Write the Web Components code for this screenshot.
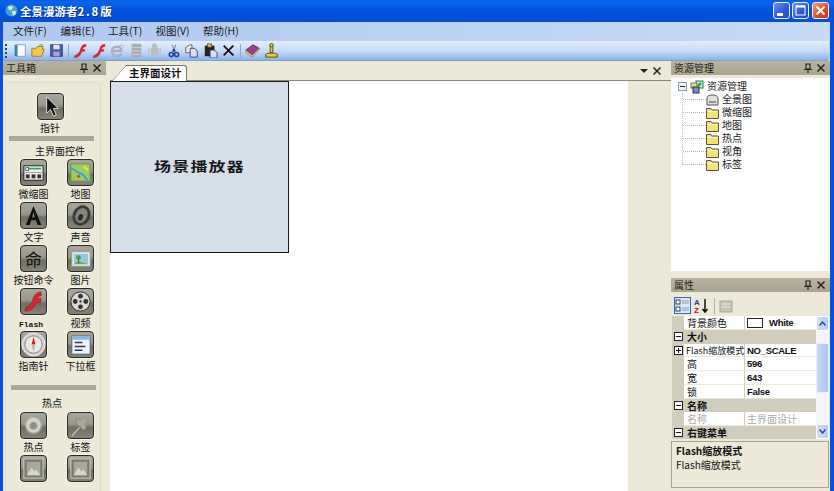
<!DOCTYPE html>
<html lang="zh">
<head>
<meta charset="utf-8">
<title>全景漫游者</title>
<style>
  html, body { margin: 0; height: 100%; overflow: hidden; background: #ece9d8; }
  body { font: 10px "Noto Sans CJK SC", "Liberation Sans", sans-serif; color: #111; }
</style>
</head>
<body>
<app-window></app-window>

<script>
// Iconos dibujados a mano, mismos nombres en toda la app
const FOLDER = '<svg width="13" height="12" viewBox="0 0 13 12"><path d="M.5 3.500V1.500h4.500l1 1.500h6.500v8.500H.5z" fill="#f3e27c" stroke="#57553f"/><path d="M1.500 4.500h10" stroke="#fff7c0"/></svg>';

const TOOL_ICONS = {
  pointer: '<path d="M9 3v17l4-4 3 7 3-1-3-7h5z" fill="#111" stroke="#ddd" stroke-width="1"/>',
  thumb: '<rect x="3" y="6" width="20" height="15" fill="#eee" stroke="#222"/><path d="M7 9h14" stroke="#2bb24c" stroke-width="2"/><rect x="5" y="8" width="3" height="3" fill="#fff" stroke="#222" stroke-width=".7"/><path d="M4 13h18" stroke="#999"/><rect x="5" y="15" width="4" height="4" fill="#333"/><rect x="11" y="15" width="4" height="4" fill="#333"/><rect x="17" y="15" width="4" height="4" fill="#333"/>',
  map: '<rect x="3" y="4" width="20" height="18" fill="#9ccc5a" stroke="#7c8c50"/><path d="M3 9c5 0 6 4 10 5s5 4 7 7" fill="none" stroke="#3a9fe0" stroke-width="2"/><circle cx="11" cy="17" r="1.600" fill="#d83a3a"/><path d="M16 6l5 5" stroke="#e6dd60" stroke-width="2"/>',
  text: '<path d="M13 3L5 23h4l1.600-5h5l1.600 5h4zM11.600 15L13 9.500l1.400 5.500z" fill="#111" fill-rule="evenodd"/>',
  sound: '<ellipse cx="14" cy="13" rx="9" ry="11" transform="rotate(25 14 13)" fill="#3a3a36"/><ellipse cx="14" cy="13" rx="6" ry="8" transform="rotate(25 14 13)" fill="#86857c"/><ellipse cx="13" cy="15" rx="2.500" ry="3.500" transform="rotate(25 13 15)" fill="#2c2c28"/>',
  picture: '<rect x="4" y="6" width="19" height="15" fill="#f3f3e8" stroke="#999"/><rect x="6" y="8" width="15" height="11" fill="#8fcbe8"/><path d="M6 19l4-3 5 1 6 2z" fill="#6aae3c"/><circle cx="11" cy="12" r="2.500" fill="#4f9a37"/><path d="M11 14v4" stroke="#7a5a30"/>',
  flash: '<path d="M21 3c-6 0-8 5-9 9-1 3-3 6-7 7l-1 4c7 0 10-4 12-9h4l1-4h-4c1-2 2-3 4-3z" fill="#d8242c" stroke="#8c1218" stroke-width=".5"/>',
  film: '<circle cx="13" cy="13" r="10" fill="#d8d8d0" stroke="#333"/><circle cx="13" cy="7.500" r="2.500" fill="#333"/><circle cx="13" cy="18.500" r="2.500" fill="#333"/><circle cx="7.500" cy="13" r="2.500" fill="#333"/><circle cx="18.500" cy="13" r="2.500" fill="#333"/><circle cx="13" cy="13" r="1.200" fill="#333"/>',
  compass: '<circle cx="13" cy="13" r="12" fill="#cfcfcf" stroke="#eee"/><circle cx="13" cy="13" r="9" fill="#e8e8e4" stroke="#888"/><path d="M13 5l2 8h-4z" fill="#e01818"/><path d="M11 13h4l-2 8z" fill="#b8b8b8"/>',
  combo: '<rect x="4" y="4" width="19" height="19" fill="#eef4fa" stroke="#567"/><path d="M4 4h19v4H4z" fill="#8db6de"/><path d="M7 11h8M7 15h11M7 19h8" stroke="#335" stroke-width="1.500"/>',
  hotspot: '<circle cx="13" cy="13" r="9" fill="#e3e2da" opacity=".4"/><circle cx="13" cy="13" r="6" fill="none" stroke="#d5d4cc" stroke-width="3"/><circle cx="13" cy="13" r="3" fill="#8d8c82"/>',
  pin: '<path d="M4 24l8-9" stroke="#cfcec6" stroke-width="1.200"/><path d="M9 11l7 7 3-2-1-5 3-3-4-4-3 3-5-1z" fill="#a9a89e" stroke="#7a796f" stroke-width=".5"/>',
  image: '<rect x="3" y="3" width="20" height="20" fill="#7c7b70" stroke="#d0cfc4"/><rect x="6" y="6" width="14" height="14" fill="#a8a79c"/><path d="M6 20l5-8 3 4 2-2 4 6z" fill="#d8d7cc"/>'
};

const BAR_ICONS = [
  '<rect x="3" y="2" width="3" height="13" fill="#2f7fb8"/><rect x="6" y="2" width="9" height="13" fill="#fff" stroke="#8a9aa8"/>',
  '<path d="M1 6h5l1-2h6v3h2l-3 8H1z" fill="#f0c850" stroke="#9a7a20"/><path d="M9 3c2-2 4-1 5 1" fill="none" stroke="#3a8a30"/>',
  '<rect x="2" y="2" width="13" height="13" fill="#4a5fc0" stroke="#243080"/><rect x="5" y="2" width="7" height="5" fill="#e8e8f4"/><rect x="5" y="10" width="7" height="5" fill="#aab"/>',
  null,
  '<path d="M15 1c-5 0-6 4-7 7s-3 5-6 6l-1 3c5 0 8-3 9-7h3l1-3h-3c1-2 2-3 4-3z" fill="#d8242c"/>',
  '<path d="M15 1c-5 0-6 4-7 7s-3 5-6 6l-1 3c5 0 8-3 9-7h3l1-3h-3c1-2 2-3 4-3z" fill="#d8242c"/>',
  '<path d="M3 9h10c0-3-2-5-5-5s-6 2-6 5 2 6 6 6c2 0 4-1 5-3" fill="none" stroke="#a9b0b8" stroke-width="2.500"/><path d="M11 3c3-2 5-1 4 2" fill="none" stroke="#a9b0b8"/>',
  '<rect x="3" y="1" width="11" height="15" fill="#a8adb2"/><path d="M3 5h11M3 9h11M3 13h11" stroke="#cdd1d5"/>',
  '<rect x="4" y="5" width="9" height="8" rx="1" fill="#b8bdc2"/><circle cx="8.500" cy="3.500" r="3" fill="#b8bdc2"/><path d="M2 6v5M15 6v5M6 13v3M11 13v3" stroke="#b8bdc2" stroke-width="1.500"/>',
  '<path d="M7 2l2 6M11 2L9 8" stroke="#777"/><circle cx="6" cy="13" r="2.300" fill="none" stroke="#1f3f9c" stroke-width="1.800"/><circle cx="12" cy="13" r="2.300" fill="none" stroke="#1f3f9c" stroke-width="1.800"/><circle cx="9" cy="8.500" r="1.800" fill="#1f3f9c"/>',
  '<path d="M2 5l5-3h2v9H2z" fill="#f4f0d8" stroke="#555"/><path d="M7 6h5l3 3v7H7z" fill="#d8e0f8" stroke="#2a3a90"/>',
  '<rect x="2" y="3" width="11" height="12" fill="#26221c"/><rect x="5" y="1" width="5" height="4" fill="#c8b060" stroke="#222" stroke-width=".6"/><path d="M8 8h5l3 3v6H8z" fill="#d8e0f8" stroke="#2a3a90"/>',
  '<path d="M3 3l11 11M14 3L3 14" stroke="#111" stroke-width="2"/>',
  null,
  '<path d="M1 8l8-6 7 4-8 8z" fill="#9a3f90" stroke="#5a2a58"/><path d="M1 8v3l7 5 8-8V6l-8 8z" fill="#e8d878" stroke="#6a5a38" stroke-width=".6"/>',
  '<path d="M7 2h3v9H7z" fill="#e8d020" stroke="#4a4210"/><circle cx="8.500" cy="2.500" r="2" fill="#e8d020" stroke="#4a4210"/><path d="M2 13c0-2 13-2 13 0v3H2z" fill="#e8d020" stroke="#4a4210"/>'
];

customElements.define('title-bar', class extends HTMLElement {
  constructor() {
    super();
    this.attachShadow({ mode: 'open' });
    this.shadowRoot.innerHTML = `
      <style>
        :host { display: flex; align-items: center; height: 22px; padding: 0 5px 1px 5px; box-sizing: border-box;
          background: linear-gradient(#0a5ad8 0, #0a66ec 8%, #0355e0 40%, #0250da 80%, #0a4ec4 100%); }
        svg.logo { margin-right: 2px; }
        .t { flex: 1; color: #fff; font-weight: 700; font-size: 11.500px; line-height: 20px; text-shadow: 1px 1px 0 #0a2f8c; }
        .t span { letter-spacing: 1.800px; }
        .btn { width: 17px; height: 17px; box-sizing: border-box; margin-left: 2px; border: 1px solid #e8eefc; border-radius: 3px;
          background: linear-gradient(135deg, #6f92ee, #2a55d8 60%, #2a48c0); }
        .btn.x { background: linear-gradient(135deg, #ee9a80, #dc4a24 60%, #c03010); margin-left: 3px; }
        .btn svg { display: block; }
      </style>
      <svg class="logo" width="13" height="13" viewBox="0 0 14 14"><circle cx="7" cy="7" r="6.500" fill="#4aa0c8"/><path d="M3 3l4-1 2 2-3 3-2-1zM7 8l4-1 1 3-3 3z" fill="#d4e8e0"/></svg>
      <span class="t">全景漫游者<span>2.8</span>版</span>
      <span class="btn"><svg width="15" height="15"><rect x="3" y="10" width="6" height="3" fill="#fff"/></svg></span>
      <span class="btn"><svg width="15" height="15"><rect x="3" y="3" width="9" height="9" fill="none" stroke="#fff"/><path d="M3 3.500h9" stroke="#fff" stroke-width="2"/></svg></span>
      <span class="btn x"><svg width="15" height="15"><path d="M3.500 3.500l8 8M11.500 3.500l-8 8" stroke="#fff" stroke-width="2"/></svg></span>`;
  }
});

customElements.define('menu-bar', class extends HTMLElement {
  constructor() {
    super();
    this.attachShadow({ mode: 'open' });
    this.shadowRoot.innerHTML = `
      <style>
        :host { display: flex; height: 19px; padding: 0 0 2px 10px; box-sizing: border-box; background: linear-gradient(90deg, #afc8f0, #c6daf6); align-items: center; }
        span { width: 47.500px; font-size: 10.500px; white-space: nowrap; color: #1a1a1a; }
      </style>
      <span>文件(F)</span><span>编辑(E)</span><span>工具(T)</span><span>视图(V)</span><span>帮助(H)</span>`;
  }
});

customElements.define('tool-strip', class extends HTMLElement {
  constructor() {
    super();
    this.attachShadow({ mode: 'open' });
    const icons = BAR_ICONS.map(p => p === null
      ? '<i class="sep"></i>'
      : `<svg width="15" height="15" viewBox="0 0 17 17">${p}</svg>`).join('');
    this.shadowRoot.innerHTML = `
      <style>
        :host { display: flex; align-items: center; height: 20px; padding-left: 2px; box-sizing: border-box; gap: 3.500px;
          background: linear-gradient(#e3effc, #c3d9f7 55%, #8fb2e6); border-bottom: 1px solid #7f9fd0; border-radius: 0 0 3px 0; margin-right: 1px; }
        .grip { width: 2px; height: 14px; margin-right: 1.500px; background: repeating-linear-gradient(#26446e 0 2px, transparent 2px 4px); }
        .sep { width: 1px; height: 14px; margin: 0 .5px; background: #8ca8d0; }
        svg { flex: none; }
      </style>
      <i class="grip"></i>${icons}`;
  }
});

customElements.define('dock-head', class extends HTMLElement {
  constructor() {
    super();
    this.attachShadow({ mode: 'open' });
    this.shadowRoot.innerHTML = `
      <style>
        :host { display: flex; align-items: center; height: 14px; padding: 0 4px 0 3px; background: linear-gradient(#b7b3a0, #a9a590); font-size: 10px; line-height: 14px; color: #1c1c14; flex: none; }
        .t { flex: 1; }
        svg { margin-left: 4px; display: block; }
      </style>
      <span class="t"><slot></slot></span>
      <svg width="9" height="10"><path d="M3 1h4v5H3zM1 6.500h8M5 7v3" fill="none" stroke="#222" stroke-width="1.200"/></svg>
      <svg width="10" height="10"><path d="M1.500 1.500l7 7M8.500 1.500l-7 7" stroke="#222" stroke-width="1.500"/></svg>`;
  }
});

customElements.define('tool-item', class extends HTMLElement {
  constructor() {
    super();
    this.attachShadow({ mode: 'open' });
  }
  connectedCallback() {
    const glyph = this.getAttribute('glyph');
    const icon = TOOL_ICONS[this.getAttribute('icon')] || '';
    const face = glyph
      ? `<span class="g">${glyph}</span>`
      : `<svg width="25" height="25" viewBox="0 0 26 26">${icon}</svg>`;
    this.shadowRoot.innerHTML = `
      <style>
        :host { display: flex; flex-direction: column; align-items: center; height: 43px; font-size: 10px; line-height: 14px; color: #111; white-space: nowrap; }
        .b { width: 27px; height: 27px; box-sizing: border-box; border: 1px solid #2b2a26; border-radius: 4px; box-shadow: 0 0 0 1px #f6f5ec;
          background: linear-gradient(#a8a79c 0, #98978c 45%, #6f6e62 58%, #85847a 100%); display: flex; align-items: center; justify-content: center; margin-bottom: 1px; }
        .g { font-size: 17px; line-height: 25px; color: #111; }
        svg { display: block; }
      </style>
      <span class="b">${face}</span>
      <span><slot></slot></span>`;
  }
});

customElements.define('tool-box', class extends HTMLElement {
  constructor() {
    super();
    this.attachShadow({ mode: 'open' });
    this.shadowRoot.innerHTML = `
      <style>
        :host { display: flex; flex-direction: column; width: 106px; padding-right: 3px; box-sizing: border-box; flex: none; overflow: hidden; background: #ece9d8; }
        .card { margin: 7px 5px 0 2px; flex: 1; border: 1px solid #dfdcc8; border-bottom: 0; border-radius: 4px 4px 0 0; padding-top: 10px; overflow: hidden; }
        .one { display: flex; justify-content: center; height: 43px; padding-right: 6px; }
        .bar { height: 5px; background: #aaa997; margin: 0 6px 0 3px; }
        .bar.b2 { margin: 11px 4px 0 5px; }
        .cap { text-align: center; font-size: 10px; }
        .cap.c1 { margin-top: 1px; height: 17px; line-height: 17px; padding-left: 14px; }
        .cap.c2 { margin-top: 4px; height: 18px; line-height: 18px; padding-right: 2px; }
        .grid { display: grid; grid-template-columns: 47px 47px; padding-left: 4px; }
        .mono { font-family: "Liberation Mono", monospace; font-size: 8px; font-weight: 700; margin-right: 5px; }
      </style>
      <dock-head>工具箱</dock-head>
      <div class="card">
        <div class="one"><tool-item icon="pointer">指针</tool-item></div>
        <div class="bar"></div>
        <div class="cap c1">主界面控件</div>
        <div class="grid">
          <tool-item icon="thumb">微缩图</tool-item><tool-item icon="map">地图</tool-item>
          <tool-item icon="text">文字</tool-item><tool-item icon="sound">声音</tool-item>
          <tool-item glyph="命">按钮命令</tool-item><tool-item icon="picture">图片</tool-item>
          <tool-item icon="flash"><span class="mono">Flash</span></tool-item><tool-item icon="film">视频</tool-item>
          <tool-item icon="compass">指南针</tool-item><tool-item icon="combo">下拉框</tool-item>
        </div>
        <div class="bar b2"></div>
        <div class="cap c2">热点</div>
        <div class="grid">
          <tool-item icon="hotspot">热点</tool-item><tool-item icon="pin">标签</tool-item>
          <tool-item icon="image"></tool-item><tool-item icon="image"></tool-item>
        </div>
      </div>`;
  }
});

customElements.define('doc-area', class extends HTMLElement {
  constructor() {
    super();
    this.attachShadow({ mode: 'open' });
    this.shadowRoot.innerHTML = `
      <style>
        :host { display: flex; flex-direction: column; flex: 1; min-width: 0; background: #ece9d8; margin-left: 1px; }
        .tabs { display: flex; align-items: flex-end; height: 20px; flex: none; border-bottom: 1px solid #8a8a80; box-sizing: border-box; padding: 0 9px 0 2px; }
        .tab { height: 16px; width: 75px; box-sizing: border-box; background: #fff; border: 1px solid #77776c; border-bottom: 0; border-radius: 0 3px 0 0; position: relative;
          font-size: 10.500px; font-weight: 700; line-height: 14px; padding-left: 16px; margin-bottom: -1px; clip-path: polygon(14px 0, 100% 0, 100% 100%, 0 100%); white-space: nowrap; }
        .slope { position: absolute; left: -1px; top: -1px; display: block; }
        .ctl { margin-left: auto; align-self: center; display: flex; gap: 4px; align-items: center; }
        .ctl svg { display: block; }
        .main { flex: 1; display: flex; min-height: 0; }
        .paper { width: 518px; background: #fff; flex: none; }
        .scene { width: 179px; height: 172px; box-sizing: border-box; background: #d5dfea; border: 1px solid #1c1c1c; display: flex; align-items: center; justify-content: center; padding-bottom: 3px; }
        .scene span { font-size: 17px; font-weight: 700; letter-spacing: 1.200px; transform: scaleY(.74); color: #151515; white-space: nowrap; }
      </style>
      <div class="tabs">
        <div class="tab"><svg class="slope" width="16" height="16"><path d="M0 16L14.500 0" stroke="#77776c" fill="none"/></svg>主界面设计</div>
        <div class="ctl">
          <svg width="8" height="8"><path d="M0 2h8L4 6z" fill="#222"/></svg>
          <svg width="10" height="10"><path d="M1.500 1.500l7 7M8.500 1.500l-7 7" stroke="#222" stroke-width="1.500"/></svg>
        </div>
      </div>
      <div class="main"><div class="paper"><div class="scene"><span>场景播放器</span></div></div></div>`;
  }
});

customElements.define('res-tree', class extends HTMLElement {
  constructor() {
    super();
    this.attachShadow({ mode: 'open' });
    const rows = ['全景图', '微缩图', '地图', '热点', '视角', '标签'].map((t, i) => `
      <div class="row"><i class="dash"></i>${i === 0
        ? '<svg width="13" height="12" viewBox="0 0 13 12"><path d="M1 4c0-2 2-3 5-3s6 1 6 3v7H1z" fill="#e0e0dc" stroke="#555"/><path d="M3 8h7" stroke="#444"/></svg>'
        : FOLDER}<span>${t}</span></div>`).join('');
    this.shadowRoot.innerHTML = `
      <style>
        :host { display: block; height: 203px; flex: none; padding-top: 3px; box-sizing: border-box; background: #ece9d8; }
        .box { background: #fff; height: 193px; padding: 2px 0 0 6px; box-sizing: border-box; border-left: 1px solid #fff; font-family: "Liberation Sans", "Noto Sans CJK SC", sans-serif; font-size: 10px; line-height: 13px; color: #222; }
        .root, .row { display: flex; align-items: center; height: 13px; }
        .pm { width: 7px; height: 7px; border: 1px solid #8a9ab0; margin-right: 3px; position: relative; flex: none; background: #f2f2ea; }
        .pm::after { content: ""; position: absolute; left: 1px; right: 1px; top: 3px; height: 1px; background: #223; }
        .root svg { margin-right: 3px; }
        .kids { margin-left: 4px; border-left: 1px dotted #bbb; height: 72px; }
        .row svg { margin-right: 3px; flex: none; }
        .dash { width: 23px; border-top: 1px dotted #bbb; flex: none; }
      </style>
      <div class="box">
        <div class="root"><i class="pm"></i>
          <svg width="14" height="14" viewBox="0 0 14 14"><rect x="6" y="1" width="7" height="7" fill="#cfe8d8" stroke="#275"/><path d="M8 6l3-3" stroke="#1a9a3a" stroke-width="2"/><rect x="1" y="3" width="6" height="5" fill="#f0d870" stroke="#776"/><rect x="3" y="7" width="6" height="6" fill="#7a88c8" stroke="#334"/></svg>
          <span>资源管理</span></div>
        <div class="kids">${rows}</div>
      </div>`;
  }
});

customElements.define('prop-grid', class extends HTMLElement {
  constructor() {
    super();
    this.attachShadow({ mode: 'open' });
    const row = (k, v, cls = '', mark = '') => `
      <div class="gut">${mark}</div><div class="k ${cls}">${k}</div><div class="v ${cls}">${v}</div>`;
    const group = t => `<div class="gut cat"><i class="pm"></i></div><div class="cat name">${t}</div>`;
    this.shadowRoot.innerHTML = `
      <style>
        :host { display: flex; flex-direction: column; flex: 1; min-height: 0; background: #ece9d8; font-size: 10px; color: #111; }
        .tb { display: flex; align-items: center; height: 24px; flex: none; padding: 3px 0 0 3px; box-sizing: border-box; gap: 3px; }
        .on { width: 17px; height: 17px; box-sizing: border-box; border: 1px solid #316ac5; background: #dce6f6; display: block; }
        .on svg { display: block; }
        .ts { width: 1px; height: 16px; background: #b8b5a2; margin: 0 1px; }
        .wrap { display: flex; height: 123px; flex: none; margin: 0 1px; }
        .grid { flex: 1; display: grid; grid-template-columns: 12px 61px 1fr; grid-auto-rows: 13.750px; line-height: 13.750px; background: #fff; overflow: hidden; min-width: 0; }
        .gut { background: #d0cdbd; display: flex; align-items: center; justify-content: center; }
        .cat { background: #d0cdbd; }
        .name { grid-column: 2 / 4; font-weight: 700; padding-left: 3px; }
        .k { padding-left: 3px; border-right: 1px solid #d0cdbd; border-bottom: 1px solid #ece9d8; box-sizing: border-box; white-space: nowrap; }
        .k.tight { font-size: 9px; padding-left: 2px; }
        .v { padding-left: 2px; font-weight: 700; font-family: "Liberation Sans", sans-serif; font-size: 9.500px; letter-spacing: -.3px; border-bottom: 1px solid #ece9d8; box-sizing: border-box; white-space: nowrap; }
        .dim { color: #aaa; }
        .v.dim { font-weight: 400; font-family: "Noto Sans CJK SC", sans-serif; font-size: 10px; letter-spacing: 0; }
        .swatch { display: inline-block; width: 16px; height: 10px; box-sizing: border-box; border: 1px solid #222; margin: 0 6px 0 0; vertical-align: -2px; }
        .pm { width: 7px; height: 7px; border: 1px solid #222; position: relative; display: block; background: #fff; }
        .pm::after { content: ""; position: absolute; left: 1px; right: 1px; top: 3px; height: 1px; background: #111; }
        .pm.plus::before { content: ""; position: absolute; top: 1px; bottom: 1px; left: 3px; width: 1px; background: #111; }
        .sb { width: 13px; flex: none; background: #f2f5fc; display: flex; flex-direction: column; }
        .arr { height: 15px; box-sizing: border-box; border: 1px solid #fff; border-radius: 2px; background: linear-gradient(90deg, #d0dffa, #b6cdf4); display: flex; align-items: center; justify-content: center; flex: none; }
        .arr.down { margin-top: auto; }
        .thumb { margin-top: 12px; height: 50px; box-sizing: border-box; background: linear-gradient(90deg, #c6d8f9, #aac4f2); border: 1px solid #e8effb; border-radius: 2px; flex: none; }
        .desc { margin: 2px 1px 0 0; height: 47px; box-sizing: border-box; border: 1px solid #a7a493; padding: 2px 4px; line-height: 14px; flex: none; background: #ece9d8; }
        .desc b { display: block; }
      </style>
      <div class="tb">
        <span class="on"><svg width="15" height="15"><rect x="1" y="2" width="4" height="4" fill="#fff" stroke="#345"/><rect x="1" y="9" width="4" height="4" fill="#fff" stroke="#345"/><path d="M7 3h7M7 5h7M7 10h7M7 12h7" stroke="#8aa"/></svg></span>
        <svg width="16" height="17"><text x="0" y="8" font-size="8" font-weight="700" fill="#2244aa" font-family="Liberation Sans">A</text><text x="0" y="16" font-size="8" font-weight="700" fill="#aa2222" font-family="Liberation Sans">Z</text><path d="M11 2v13M8.500 12l2.500 3 2.500-3" fill="none" stroke="#111" stroke-width="1.500"/></svg>
        <i class="ts"></i>
        <svg width="14" height="14"><rect x="1" y="2" width="12" height="11" fill="#c6c4b6" stroke="#aaa89a"/><path d="M3 5h8M3 8h8" stroke="#eeece0"/></svg>
      </div>
      <div class="wrap">
        <div class="grid">
          ${row('背景颜色', '<span class="swatch"></span>White')}
          ${group('大小')}
          ${row('Flash缩放模式', 'NO_SCALE', '', '<i class="pm plus"></i>').replace('class="k "', 'class="k tight"')}
          ${row('高', '596')}
          ${row('宽', '643')}
          ${row('锁', 'False')}
          ${group('名称')}
          ${row('名称', '主界面设计', 'dim')}
          ${group('右键菜单')}
        </div>
        <div class="sb">
          <div class="arr"><svg width="7" height="5"><path d="M.5 4.500L3.500 1l3 3.500" fill="none" stroke="#2a4a90" stroke-width="1.500"/></svg></div>
          <div class="thumb"></div>
          <div class="arr down"><svg width="7" height="5"><path d="M.5.5L3.500 4l3-3.500" fill="none" stroke="#2a4a90" stroke-width="1.500"/></svg></div>
        </div>
      </div>
      <div class="desc"><b>Flash缩放模式</b>Flash缩放模式</div>`;
  }
});

customElements.define('app-window', class extends HTMLElement {
  constructor() {
    super();
    this.attachShadow({ mode: 'open' });
    this.shadowRoot.innerHTML = `
      <style>
        :host { display: flex; flex-direction: column; height: 491px; width: 834px; overflow: hidden; background: #0a50d8; }
        .client { flex: 1; display: flex; flex-direction: column; margin: 0 4px 0 3px; min-height: 0; background: #ece9d8; }
        .bars { background: #bcd2f2; flex: none; }
        .work { flex: 1; display: flex; min-height: 0; }
        .right { width: 159px; flex: none; display: flex; flex-direction: column; }
      </style>
      <title-bar></title-bar>
      <div class="client">
        <div class="bars"><menu-bar></menu-bar><tool-strip></tool-strip></div>
        <div class="work">
          <tool-box></tool-box>
          <doc-area></doc-area>
          <div class="right">
            <dock-head>资源管理</dock-head>
            <res-tree></res-tree>
            <dock-head>属性</dock-head>
            <prop-grid></prop-grid>
          </div>
        </div>
      </div>`;
  }
});
</script>
</body>
</html>
